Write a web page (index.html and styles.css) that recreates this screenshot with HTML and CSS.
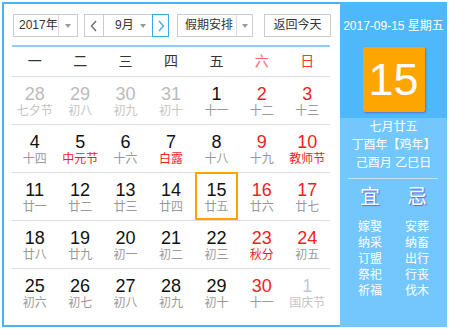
FILE: index.html
```html
<!DOCTYPE html>
<html lang="zh-CN">
<head>
    <meta charset="UTF-8">
    <meta name="viewport" content="width=device-width, initial-scale=1.0">
    <title>万年历</title>
    <link rel="stylesheet" href="styles.css">
</head>
<body>
    <div class="calendar">
        <!-- Left: toolbar + month grid -->
        <div class="main">
            <div class="toolbar">
                <div class="select year">
                    <span class="select-text">2017年</span>
                    <span class="select-arrow"><i class="caret"></i></span>
                </div>
                <div class="month-group">
                    <span class="nav prev">
                        <svg width="8" height="12" viewBox="0 0 8 12"><polyline points="6,1 1.5,6 6,11" fill="none" stroke="#666" stroke-width="1.3"/></svg>
                    </span>
                    <div class="select month">
                        <span class="select-text">9月</span>
                        <span class="select-arrow"><i class="caret"></i></span>
                    </div>
                    <span class="nav next">
                        <svg width="8" height="12" viewBox="0 0 8 12"><polyline points="2,1 6.5,6 2,11" fill="none" stroke="#3aa9ef" stroke-width="1.3"/></svg>
                    </span>
                </div>
                <div class="select holiday">
                    <span class="select-text">假期安排</span>
                    <span class="select-arrow"><i class="caret"></i></span>
                </div>
                <div class="btn-today">返回今天</div>
            </div>

            <div class="grid">
                <div class="weekdays">
                    <span>一</span><span>二</span><span>三</span><span>四</span><span>五</span>
                    <span class="sat">六</span><span class="sun">日</span>
                </div>

                <div class="week">
                    <div class="day other"><span class="num">28</span><span class="lunar">七夕节</span></div>
                    <div class="day other"><span class="num">29</span><span class="lunar">初八</span></div>
                    <div class="day other"><span class="num">30</span><span class="lunar">初九</span></div>
                    <div class="day other"><span class="num">31</span><span class="lunar">初十</span></div>
                    <div class="day"><span class="num">1</span><span class="lunar">十一</span></div>
                    <div class="day weekend"><span class="num">2</span><span class="lunar">十二</span></div>
                    <div class="day weekend"><span class="num">3</span><span class="lunar">十三</span></div>
                </div>
                <div class="week">
                    <div class="day"><span class="num">4</span><span class="lunar">十四</span></div>
                    <div class="day"><span class="num">5</span><span class="lunar fest">中元节</span></div>
                    <div class="day"><span class="num">6</span><span class="lunar">十六</span></div>
                    <div class="day"><span class="num">7</span><span class="lunar fest">白露</span></div>
                    <div class="day"><span class="num">8</span><span class="lunar">十八</span></div>
                    <div class="day weekend"><span class="num">9</span><span class="lunar">十九</span></div>
                    <div class="day weekend"><span class="num">10</span><span class="lunar fest">教师节</span></div>
                </div>
                <div class="week">
                    <div class="day"><span class="num">11</span><span class="lunar">廿一</span></div>
                    <div class="day"><span class="num">12</span><span class="lunar">廿二</span></div>
                    <div class="day"><span class="num">13</span><span class="lunar">廿三</span></div>
                    <div class="day"><span class="num">14</span><span class="lunar">廿四</span></div>
                    <div class="day today"><span class="num">15</span><span class="lunar">廿五</span></div>
                    <div class="day weekend"><span class="num">16</span><span class="lunar">廿六</span></div>
                    <div class="day weekend"><span class="num">17</span><span class="lunar">廿七</span></div>
                </div>
                <div class="week">
                    <div class="day"><span class="num">18</span><span class="lunar">廿八</span></div>
                    <div class="day"><span class="num">19</span><span class="lunar">廿九</span></div>
                    <div class="day"><span class="num">20</span><span class="lunar">初一</span></div>
                    <div class="day"><span class="num">21</span><span class="lunar">初二</span></div>
                    <div class="day"><span class="num">22</span><span class="lunar">初三</span></div>
                    <div class="day weekend"><span class="num">23</span><span class="lunar fest">秋分</span></div>
                    <div class="day weekend"><span class="num">24</span><span class="lunar">初五</span></div>
                </div>
                <div class="week last">
                    <div class="day"><span class="num">25</span><span class="lunar">初六</span></div>
                    <div class="day"><span class="num">26</span><span class="lunar">初七</span></div>
                    <div class="day"><span class="num">27</span><span class="lunar">初八</span></div>
                    <div class="day"><span class="num">28</span><span class="lunar">初九</span></div>
                    <div class="day"><span class="num">29</span><span class="lunar">初十</span></div>
                    <div class="day weekend"><span class="num">30</span><span class="lunar">十一</span></div>
                    <div class="day other next-month"><span class="num">1</span><span class="lunar">国庆节</span></div>
                </div>
            </div>
        </div>

        <!-- Right: selected day detail -->
        <div class="panel">
            <div class="panel-top">
                <div class="panel-date">2017-09-15 星期五</div>
                <div class="big-day">15</div>
            </div>
            <div class="panel-bottom">
                <div class="lunar-info">
                    <div>七月廿五</div>
                    <div>丁酉年【鸡年】</div>
                    <div>己酉月 乙巳日</div>
                </div>
                <div class="divider"></div>
                <div class="almanac">
                    <div class="almanac-col">
                        <div class="almanac-title">宜</div>
                        <div>嫁娶</div><div>纳采</div><div>订盟</div><div>祭祀</div><div>祈福</div>
                    </div>
                    <div class="almanac-col">
                        <div class="almanac-title">忌</div>
                        <div>安葬</div><div>纳畜</div><div>出行</div><div>行丧</div><div>伐木</div>
                    </div>
                </div>
            </div>
        </div>
    </div>
</body>
</html>
```

FILE: styles.css
```css
/* General styling */
body, html {
    margin: 0;
    padding: 0;
    background: #fff;
    font-family: "Liberation Sans", "Noto Sans CJK SC", sans-serif;
    color: #333;
}

.calendar {
    display: flex;
    margin: 2px;
    width: 443px;
    height: 321px;
    border: 2px solid #4ab4f2;
    border-right: none;
}

.main {
    width: 336px;
    padding: 10px 0 0 8px;
    box-sizing: border-box;
}

/* Toolbar */
.toolbar {
    display: flex;
    height: 23px;
    padding-left: 1px;
    white-space: nowrap;
}

.select {
    display: flex;
    height: 23px;
    border: 1px solid #ccc;
    box-sizing: border-box;
    font-size: 12px;
    line-height: 21px;
    background: #fff;
}

.select-text {
    flex: 1;
    padding-left: 5px;
    white-space: nowrap;
}

.select-arrow {
    flex: none;
    width: 18px;
    border-left: 1px solid #ddd;
    display: flex;
    align-items: center;
    justify-content: center;
}

.caret {
    width: 0;
    height: 0;
    border-top: 4px solid #999;
    border-left: 3px solid transparent;
    border-right: 3px solid transparent;
}

.year {
    width: 65px;
}

.month-group {
    display: flex;
    margin-left: 6px;
}

.nav {
    display: flex;
    align-items: center;
    justify-content: center;
    height: 23px;
    box-sizing: border-box;
    border: 1px solid #ccc;
}

.prev {
    width: 19px;
    border-right: none;
}

.next {
    width: 17px;
    border-color: #3aa9ef;
}

.month {
    width: 49px;
    border-right: none;
}

.month .select-text {
    padding-left: 11px;
}

.month .select-arrow {
    border-left: none;
}

.holiday {
    width: 76px;
    margin-left: 8px;
}

.holiday .select-text {
    padding-left: 7px;
}

.holiday .select-arrow {
    width: 15px;
}

.btn-today {
    width: 67px;
    height: 23px;
    margin-left: 11px;
    border: 1px solid #ccc;
    box-sizing: border-box;
    font-size: 12px;
    line-height: 21px;
    text-align: center;
}

/* Month grid */
.grid {
    width: 318px;
    margin-top: 8px;
    border-top: 2px solid #8ccff5;
}

.weekdays {
    display: grid;
    grid-template-columns: repeat(7, 1fr);
    height: 29px;
    line-height: 29px;
    border-bottom: 1px solid #ddd;
    text-align: center;
    font-size: 14px;
    color: #333;
}

.weekdays .sat {
    color: #f66;
}

.weekdays .sun {
    color: #f33;
}

.week {
    display: grid;
    grid-template-columns: repeat(7, 1fr);
    height: 48px;
    border-bottom: 1px solid #ddd;
    box-sizing: border-box;
}

.week.last {
    border-bottom: none;
}

.day {
    display: flex;
    flex-direction: column;
    align-items: center;
    margin: -1px 1px 0;
    padding-top: 6px;
    border: 2px solid transparent;
    height: 48px;
    box-sizing: border-box;
}

.num {
    font-size: 18px;
    line-height: 20px;
    color: #111;
}

.lunar {
    font-size: 12px;
    line-height: 15px;
    color: #999;
}

.weekend .num {
    color: #f21d1d;
}

.lunar.fest {
    color: #f21d1d;
}

.other .num {
    color: #bbb;
}

.other .lunar {
    color: #c4c4c4;
}

.next-month .num {
    color: #b9c9d8;
}

.today {
    border-color: #ffa200;
}

/* Right panel */
.panel {
    width: 107px;
    display: flex;
    flex-direction: column;
    color: #fff;
    margin-top: -2px;
    margin-bottom: -2px;
}

.panel-top {
    background: #4fb8fb;
    padding-top: 16px;
    height: 116px;
    box-sizing: border-box;
    display: flex;
    flex-direction: column;
    align-items: center;
}

.panel-date {
    font-size: 12px;
    line-height: 16px;
}

.big-day {
    width: 62px;
    height: 65px;
    margin-top: 13px;
    background: #ffa500;
    border-radius: 2px;
    box-shadow: 1px 1px 2px rgba(90, 70, 180, 0.6);
    text-align: center;
    font-size: 45px;
    line-height: 65px;
}

.panel-bottom {
    flex: 1;
    background: #73c7fd;
}

.lunar-info {
    text-align: center;
    font-size: 12px;
    line-height: 18px;
}

.divider {
    height: 1px;
    margin: 6px 9px 0 8px;
    background: rgba(255, 255, 255, 0.55);
}

.almanac {
    display: grid;
    grid-template-columns: 47px 47px;
    justify-content: center;
    margin-top: 6px;
    text-align: center;
    font-size: 12px;
    line-height: 16px;
}

.almanac-title {
    font-size: 20px;
    line-height: 24px;
    margin-bottom: 10px;
    text-shadow: 1px 1px 1px #6a5fe0;
}
```
